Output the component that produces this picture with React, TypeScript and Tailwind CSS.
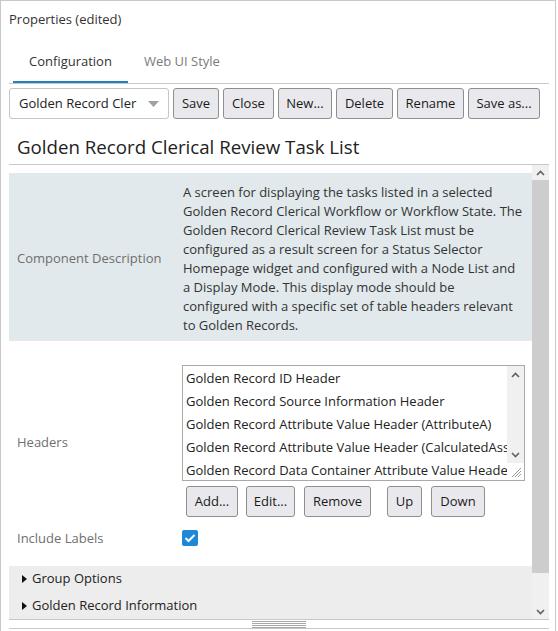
import React from "react";

const descLines = [
  "A screen for displaying the tasks listed in a selected",
  "Golden Record Clerical Workflow or Workflow State. The",
  "Golden Record Clerical Review Task List must be",
  "configured as a result screen for a Status Selector",
  "Homepage widget and configured with a Node List and",
  "a Display Mode. This display mode should be",
  "configured with a specific set of table headers relevant",
  "to Golden Records.",
];

const headers = [
  "Golden Record ID Header",
  "Golden Record Source Information Header",
  "Golden Record Attribute Value Header (AttributeA)",
  "Golden Record Attribute Value Header (CalculatedAsset)",
  "Golden Record Data Container Attribute Value Header",
];

function Chevron({ dir }: { dir: "up" | "down" }) {
  return (
    <svg width="9" height="6" viewBox="0 0 9 6">
      <path
        d={dir === "up" ? "M1 5 L4.5 1.5 L8 5" : "M1 1 L4.5 4.5 L8 1"}
        stroke="#606060"
        strokeWidth="1.6"
        fill="none"
      />
    </svg>
  );
}

function Btn({ w, children, className = "" }: { w: string; children: React.ReactNode; className?: string }) {
  return (
    <div
      className={`${w} ${className} h-[31px] pt-[1px] border border-[#8f8f8f] bg-[#e9e9ed] rounded-[3px] flex items-center justify-center text-[#1a1a1a] whitespace-nowrap`}
    >
      {children}
    </div>
  );
}

function Tri() {
  return (
    <svg width="5" height="8" viewBox="0 0 5 8">
      <path d="M0 0 L5 4 L0 8 Z" fill="#111" />
    </svg>
  );
}

export default function App() {
  return (
    <div className="w-[558px] h-[631px] overflow-hidden bg-white font-['Open_Sans',sans-serif] text-[13px] text-[#333]">
      <div className="w-[556px] h-[700px] border border-[#c8c8c8] flex flex-col pl-[8px] pr-[6px]">
        <div className="h-[36px] pt-[2px] flex items-center">Properties (edited)</div>

        <div className="h-[47px] border-b border-[#c8c8c8] flex pl-[4px]">
          <div className="px-[16px] flex items-center pt-[5px] border-b-2 border-[#1f7fc0] text-[#333]">
            Configuration
          </div>
          <div className="px-[16px] flex items-center pt-[3px] text-[#7a7a7a]">Web UI Style</div>
        </div>

        <div className="mt-[4px] h-[31px] flex gap-[4px]">
          <div className="w-[160px] h-[31px] pt-[1px] border border-[#c5c5c5] rounded-[3px] flex items-center justify-between pl-[9px] pr-[9px] text-[#222]">
            <span className="whitespace-nowrap">Golden Record Cler</span>
            <svg width="11" height="6" viewBox="0 0 11 6">
              <path d="M0 0 L11 0 L5.5 6 Z" fill="#a0a0a0" />
            </svg>
          </div>
          <Btn w="w-[46px]">Save</Btn>
          <Btn w="w-[51px]">Close</Btn>
          <Btn w="w-[54px]">New...</Btn>
          <Btn w="w-[57px]">Delete</Btn>
          <Btn w="w-[67px]">Rename</Btn>
          <Btn w="w-[72px]">Save as...</Btn>
        </div>

        <div className="mt-[11px] h-[35px] border-b border-[#c8c8c8] pl-[8px] flex items-center text-[18.7px] text-[#222]">
          Golden Record Clerical Review Task List
        </div>

        <div className="h-[455px] border-b border-[#c8c8c8] flex">
          <div className="flex-1 overflow-hidden pt-[8px]">
            <div className="bg-[#e1e9ec] flex">
              <div className="w-[174px] pl-[8px] pt-[3px] flex items-center text-[#6f6f6f]">Component Description</div>
              <div className="pt-[10px] pb-[6px] leading-[19px] text-[#333]">
                {descLines.map((l) => (
                  <div key={l} className="whitespace-nowrap">
                    {l}
                  </div>
                ))}
              </div>
            </div>

            <div className="mt-[24px] flex">
              <div className="w-[173px] pl-[8px] pt-[3px] flex items-center text-[#6f6f6f]">Headers</div>
              <div className="flex flex-col">
                <div className="w-[343px] h-[116px] border border-[#a9a9a9] flex">
                  <div className="flex-1 overflow-hidden pt-[1px] pl-[3px]">
                    {headers.map((h) => (
                      <div key={h} className="h-[23px] leading-[23px] whitespace-nowrap text-[#222]">
                        {h}
                      </div>
                    ))}
                  </div>
                  <div className="w-[17px] flex flex-col">
                    <div className="bg-[#f0f0f0] flex-1 flex flex-col">
                      <div className="h-[17px] flex items-center justify-center">
                        <Chevron dir="up" />
                      </div>
                      <div className="flex-1" />
                      <div className="h-[17px] flex items-center justify-center">
                        <Chevron dir="down" />
                      </div>
                    </div>
                    <div className="h-[17px] bg-white flex items-end justify-end p-[2px]">
                      <svg width="12" height="12" viewBox="0 0 12 12">
                        <path d="M11 2 L2 11 M11 5 L5 11 M11 8 L8 11" stroke="#9a9a9a" strokeWidth="1" />
                      </svg>
                    </div>
                  </div>
                </div>
                <div className="mt-[5px] flex pl-[4px]">
                  <Btn w="w-[52px]">Add...</Btn>
                  <Btn w="w-[49px]" className="ml-[8px]">Edit...</Btn>
                  <Btn w="w-[67px]" className="ml-[9px]">Remove</Btn>
                  <Btn w="w-[35px]" className="ml-[16px]">Up</Btn>
                  <Btn w="w-[54px]" className="ml-[9px]">Down</Btn>
                </div>
              </div>
            </div>

            <div className="mt-[8px] h-[26px] flex items-center">
              <div className="w-[173px] pl-[8px] pt-[2px] text-[#6f6f6f]">Include Labels</div>
              <div className="w-[16px] h-[16px] rounded-[2px] bg-[#1e88d8] flex items-center justify-center">
                <svg width="12" height="10" viewBox="0 0 12 10">
                  <path d="M1.5 5 L4.5 8 L10.5 2" stroke="white" strokeWidth="2" fill="none" />
                </svg>
              </div>
            </div>

            <div className="mt-[15px] bg-[#ededed] text-[#222]">
              <div className="h-[26px] flex items-center pl-[13px] gap-[5px]">
                <Tri />
                <span>Group Options</span>
              </div>
              <div className="h-[27px] flex items-center pl-[13px] gap-[5px]">
                <Tri />
                <span>Golden Record Information</span>
              </div>
            </div>
          </div>

          <div className="w-[17px] bg-[#f0f0f0] flex flex-col">
            <div className="h-[15px] flex items-center justify-center">
              <Chevron dir="up" />
            </div>
            <div className="h-[393px] bg-[#cdcdcd]" />
            <div className="flex-1" />
            <div className="h-[15px] flex items-center justify-center">
              <Chevron dir="down" />
            </div>
          </div>
        </div>

        <div className="h-[9px] border-b border-[#c8c8c8] flex items-center justify-center">
          <div className="w-[54px] flex flex-col gap-[1px]">
            <div className="h-[1px] bg-[#a8a8a8]" />
            <div className="h-[1px] bg-[#a8a8a8]" />
            <div className="h-[1px] bg-[#a8a8a8]" />
            <div className="h-[1px] bg-[#a8a8a8]" />
          </div>
        </div>
      </div>
    </div>
  );
}
